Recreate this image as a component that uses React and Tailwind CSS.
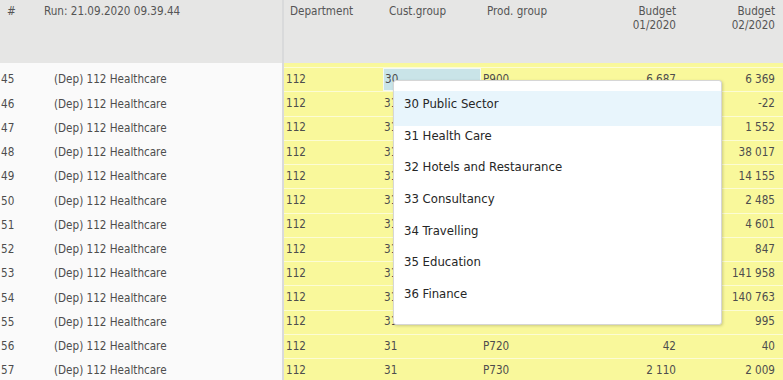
const rows = [
  { n: 45, cust: "30", prod: "P900", b1: "6 687", b2: "6 369" },
  { n: 46, cust: "31", prod: "", b1: "", b2: "-22" },
  { n: 47, cust: "31", prod: "", b1: "", b2: "1 552" },
  { n: 48, cust: "31", prod: "", b1: "", b2: "38 017" },
  { n: 49, cust: "31", prod: "", b1: "", b2: "14 155" },
  { n: 50, cust: "31", prod: "", b1: "", b2: "2 485" },
  { n: 51, cust: "31", prod: "", b1: "", b2: "4 601" },
  { n: 52, cust: "31", prod: "", b1: "", b2: "847" },
  { n: 53, cust: "31", prod: "", b1: "", b2: "141 958" },
  { n: 54, cust: "31", prod: "", b1: "", b2: "140 763" },
  { n: 55, cust: "31", prod: "", b1: "", b2: "995" },
  { n: 56, cust: "31", prod: "P720", b1: "42", b2: "40" },
  { n: 57, cust: "31", prod: "P730", b1: "2 110", b2: "2 009" },
];

const options = [
  "30 Public Sector",
  "31 Health Care",
  "32 Hotels and Restaurance",
  "33 Consultancy",
  "34 Travelling",
  "35 Education",
  "36 Finance",
];

function App() {
  return (
    <div
      className="relative w-[783px] h-[380px] overflow-hidden bg-[#fafafa] text-[11.6px] text-[#4d4d4d]"
      style={{ fontFamily: '"DejaVu Sans Condensed", "Liberation Sans", sans-serif' }}
    >
      {/* header */}
      <div className="flex h-[63px] bg-[#e6e6e5] leading-[14px] text-[#555]">
        <div className="w-[284px] flex pt-[4px] border-r-2 border-[#d9dadb]">
          <div className="w-[44px] pl-[7px]">#</div>
          <div>Run: 21.09.2020 09.39.44</div>
        </div>
        <div className="flex pt-[4px]">
          <div className="w-[99px] pl-[6px]">Department</div>
          <div className="w-[98px] pl-[6px]">Cust.group</div>
          <div className="w-[98px] pl-[6px]">Prod. group</div>
          <div className="w-[99px] pr-[2px] text-right">
            Budget
            <br />
            01/2020
          </div>
          <div className="w-[99px] pr-[2px] text-right">
            Budget
            <br />
            02/2020
          </div>
        </div>
      </div>

      {/* partial row scrolled away */}
      <div className="flex h-[5px]">
        <div className="w-[284px] border-r-2 border-[#d9dadb]" />
        <div className="flex-1 bg-[#f9f89b] border-b border-[#fcfcd4]" />
      </div>

      {rows.map((r) => (
        <div key={r.n} className="flex h-[24.25px] items-center">
          <div className="w-[284px] h-full flex items-center border-r-2 border-[#d9dadb]">
            <div className="w-[54px] pl-[1px]">{r.n}</div>
            <div>(Dep) 112 Healthcare</div>
          </div>
          <div className="flex-1 h-full flex items-center bg-[#f9f89b] border-b border-[#fcfcd4]">
            <div className="w-[99px] pl-[2px]">112</div>
            {r.n === 45 ? (
              <div className="w-[98px] h-full flex items-center pl-[1px] bg-[#c9e4e8] border border-[#f3f8f5]">
                {r.cust}
              </div>
            ) : (
              <div className="w-[98px] pl-[1px]">{r.cust}</div>
            )}
            <div className="w-[98px] pl-[2px]">{r.prod}</div>
            <div className="w-[99px] pr-[2px] text-right">{r.b1}</div>
            <div className="w-[99px] pr-[2px] text-right">{r.b2}</div>
          </div>
        </div>
      ))}

      {/* dropdown */}
      <div className="absolute left-[393px] top-[80px] w-[329px] h-[245px] bg-white border border-[#d6d6d6] rounded-[3px] shadow-[1px_1px_3px_rgba(0,0,0,0.18)] pt-[10px] text-[13px] text-[#262626]">
        {options.map((o, i) => (
          <div
            key={o}
            className={
              i === 0
                ? "h-[35px] mb-[-3.3px] pl-[10px] pt-[3px] bg-[#e8f5fc]"
                : "h-[31.7px] pl-[10px] pt-[3px]"
            }
          >
            {o}
          </div>
        ))}
      </div>
    </div>
  );
}

export default App;
